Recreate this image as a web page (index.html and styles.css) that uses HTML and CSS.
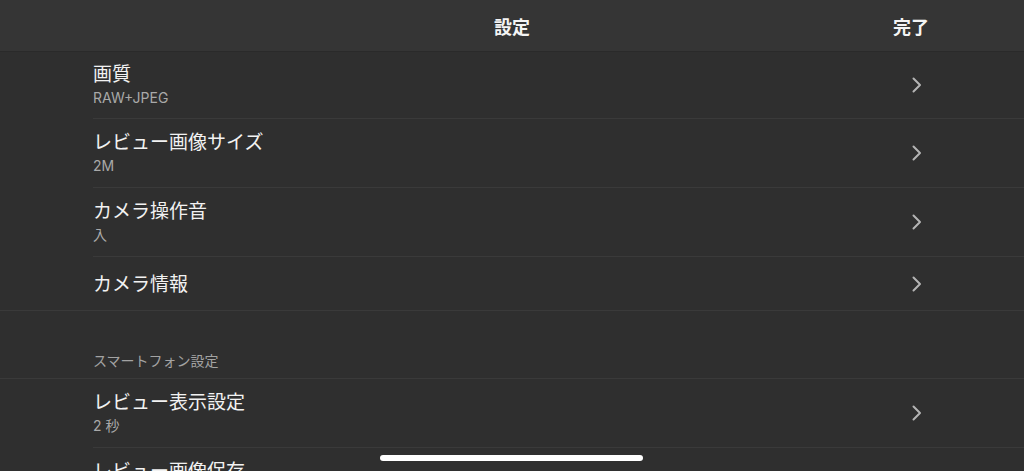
FILE: index.html
```html
<!DOCTYPE html>
<html lang="ja">
<head>
<meta charset="utf-8">
<title>設定</title>
<link rel="stylesheet" href="styles.css">
</head>
<body>
<div class="screen">
  <header class="navbar">
    <div class="nav-side"></div>
    <div class="nav-title">設定</div>
    <div class="nav-side nav-done">完了</div>
  </header>

  <section class="group">
    <div class="row">
      <div class="row-text">
        <div class="row-title">画質</div>
        <div class="row-sub">RAW+JPEG</div>
      </div>
      <svg class="chev" viewBox="0 0 10 16" width="10" height="16"><path d="M1.5 1.5 L8 8 L1.5 14.5"/></svg>
    </div>
    <div class="row">
      <div class="row-text">
        <div class="row-title">レビュー画像サイズ</div>
        <div class="row-sub">2M</div>
      </div>
      <svg class="chev" viewBox="0 0 10 16" width="10" height="16"><path d="M1.5 1.5 L8 8 L1.5 14.5"/></svg>
    </div>
    <div class="row">
      <div class="row-text">
        <div class="row-title">カメラ操作音</div>
        <div class="row-sub">入</div>
      </div>
      <svg class="chev" viewBox="0 0 10 16" width="10" height="16"><path d="M1.5 1.5 L8 8 L1.5 14.5"/></svg>
    </div>
    <div class="row row-single">
      <div class="row-text">
        <div class="row-title">カメラ情報</div>
      </div>
      <svg class="chev" viewBox="0 0 10 16" width="10" height="16"><path d="M1.5 1.5 L8 8 L1.5 14.5"/></svg>
    </div>
  </section>

  <div class="section-header">スマートフォン設定</div>

  <section class="group group-top">
    <div class="row">
      <div class="row-text">
        <div class="row-title">レビュー表示設定</div>
        <div class="row-sub">2 秒</div>
      </div>
      <svg class="chev" viewBox="0 0 10 16" width="10" height="16"><path d="M1.5 1.5 L8 8 L1.5 14.5"/></svg>
    </div>
    <div class="row">
      <div class="row-text">
        <div class="row-title">レビュー画像保存</div>
        <div class="row-sub">入</div>
      </div>
      <svg class="chev" viewBox="0 0 10 16" width="10" height="16"><path d="M1.5 1.5 L8 8 L1.5 14.5"/></svg>
    </div>
  </section>

  <div class="home-indicator"></div>
</div>
</body>
</html>
```
FILE: styles.css
```css
html, body {
  margin: 0;
  padding: 0;
  background: #2f2f2f;
}
body {
  font-family: Inter, "Noto Sans CJK JP", sans-serif;
  color: #f2f2f2;
}
.screen {
  position: relative;
  width: 1024px;
  height: 471px;
  overflow: hidden;
  background: #2f2f2f;
}
.navbar {
  height: 52px;
  background: #353535;
  border-bottom: 1px solid #2a2a2a;
  box-sizing: border-box;
  display: grid;
  grid-template-columns: 1fr auto 1fr;
  align-items: center;
}
.nav-title {
  font-size: 18px;
  font-weight: 700;
  color: #f4f4f4;
}
.nav-done {
  text-align: right;
  padding-right: 95px;
  font-size: 18px;
  font-weight: 700;
  color: #f4f4f4;
}
.group {
  border-bottom: 1px solid #3a3a3a;
}
.group-top {
  border-top: 1px solid #3a3a3a;
}
.row {
  margin-left: 93px;
  padding-right: 102px;
  height: 69px;
  box-sizing: border-box;
  border-bottom: 1px solid #3a3a3a;
  display: flex;
  align-items: center;
}
.group:first-of-type .row:first-child {
  height: 67px;
}
.row:last-child {
  border-bottom: none;
}
.row-single {
  height: 53px;
}
.row-single .row-text {
  padding-top: 3px;
}
.row-text {
  flex: 1;
  display: flex;
  flex-direction: column;
}
.row-title {
  font-size: 19px;
  line-height: 22px;
  color: #f2f2f2;
}
.row-sub {
  margin-top: 3px;
  font-size: 14px;
  line-height: 18px;
  color: #a9a9a9;
}
.chev {
  flex: none;
  fill: none;
  stroke: #b4b4b4;
  stroke-width: 2;
  stroke-linecap: round;
  stroke-linejoin: round;
}
.section-header {
  height: 67px;
  box-sizing: border-box;
  padding-left: 93px;
  padding-bottom: 8px;
  display: flex;
  align-items: flex-end;
  font-size: 14px;
  line-height: 18px;
  color: #a3a3a3;
}
.home-indicator {
  position: absolute;
  left: 380px;
  top: 455px;
  width: 263px;
  height: 6px;
  border-radius: 3px;
  background: #ffffff;
}
```
